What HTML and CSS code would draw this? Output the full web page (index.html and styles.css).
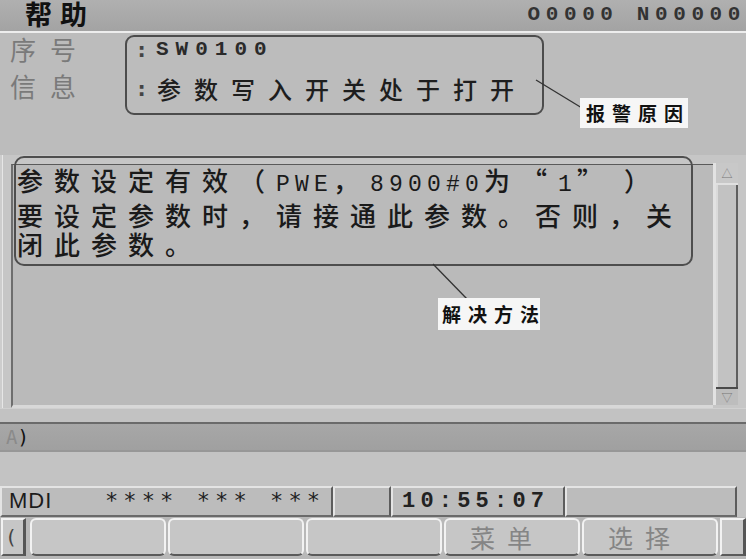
FILE: index.html
```html
<!DOCTYPE html>
<html lang="zh-CN">
<head>
    <meta charset="UTF-8">
    <meta name="viewport" content="width=device-width, initial-scale=1.0">
    <title>帮助</title>
    <link rel="stylesheet" href="styles.css">
</head>
<body>

<div class="screen">
    <div class="titlebar">
        <span class="title">帮助</span>
        <span class="prog">O0000 N00000</span>
    </div>

    <div class="info">
        <div class="labels">
            <div>序号</div>
            <div>信息</div>
        </div>
        <div class="alarm-box">
            <div class="row row-code"><span class="colon">:</span><span class="code">SW0100</span></div>
            <div class="row row-text"><span class="colon">:</span><span>参数写入开关处于打开</span></div>
        </div>
    </div>

    <div class="panel">
        <div class="text-area">
            <div class="msg">
                参数设定有效（<span class="half">PWE</span>，<span class="half">8900#0</span>为“<span class="half">1</span><span class="close-quote">”</span>）<br>
                要设定参数时，请接通此参数。否则，关<br>
                闭此参数。
            </div>
        </div>
        <div class="scrollbar">
            <div class="scroll-btn up">&#9651;</div>
            <div class="scroll-track"></div>
            <div class="scroll-btn down">&#9661;</div>
        </div>
    </div>

    <div class="spacer"></div>

    <div class="inputbar"><span class="dim">A</span>)</div>

    <div class="blank"></div>

    <div class="status">
        <div class="cell cell-mode"><span class="mode">MDI</span><span class="stars">****&nbsp;***&nbsp;***</span></div>
        <div class="cell cell-empty"></div>
        <div class="cell cell-time">10:55:07</div>
        <div class="cell cell-rest"></div>
    </div>

    <div class="softkeys">
        <div class="key key-small">(</div>
        <div class="key"></div>
        <div class="key"></div>
        <div class="key"></div>
        <div class="key">菜单</div>
        <div class="key">选择</div>
        <div class="key key-small right"></div>
    </div>

    <!-- notes drawn over the screen -->
    <svg class="leaders" width="746" height="559" viewBox="0 0 746 559">
        <line x1="536" y1="80" x2="582" y2="108" stroke="#333" stroke-width="1.3"/>
        <line x1="433" y1="264" x2="468" y2="300" stroke="#333" stroke-width="1.3"/>
    </svg>
    <div class="note note-alarm">报警原因</div>
    <div class="note note-fix">解决方法</div>
</div>

</body>
</html>
```

FILE: styles.css
```css
body {
    margin: 0;
    padding: 0;
    background-color: #bcbcbc;
    font-family: "Noto Sans CJK SC", sans-serif;
    color: #1e1e1e;
}
.screen {
    position: relative;
    width: 746px;
    height: 559px;
    overflow: hidden;
    background-color: #bcbcbc;
}
.titlebar {
    height: 31px;
    display: flex;
    justify-content: space-between;
    background: linear-gradient(#b0b0b0, #a3a3a3);
    border-bottom: 2px solid #ededed;
}
.title {
    padding-left: 25px;
    font-size: 27px;
    font-weight: bold;
    line-height: 28px;
    letter-spacing: 8px;
    color: #111;
}
.prog {
    padding-top: 4px;
    font-family: "Liberation Mono", monospace;
    font-variant-numeric: slashed-zero;
    font-size: 21px;
    font-weight: bold;
    line-height: 22px;
    letter-spacing: 5.6px;
    color: #333;
    white-space: nowrap;
}
.info {
    height: 122px;
    display: flex;
}
.labels {
    width: 115px;
    padding-left: 10px;
    margin-top: -3px;
    font-size: 26px;
    line-height: 37px;
    letter-spacing: 14px;
    color: #7a7a7a;
}
.alarm-box {
    margin-top: 2px;
    width: 407px;
    height: 76px;
    border: 2px solid #4c4c4c;
    border-radius: 9px;
    padding-left: 8px;
}
.row {
    display: flex;
    white-space: nowrap;
}
.row-code {
    line-height: 26px;
    font-family: "Liberation Mono", monospace;
    font-variant-numeric: slashed-zero;
    font-size: 21px;
    font-weight: bold;
    letter-spacing: 7px;
    color: #2a2a2a;
}
.row-text {
    margin-top: 8px;
    line-height: 36px;
    font-size: 24px;
    font-weight: 500;
    letter-spacing: 13px;
}
.colon {
    width: 22px;
    font-family: "DejaVu Sans Mono", monospace;
    font-size: 22px;
    font-weight: bold;
    color: #444;
}
.row-code .colon {
    width: 21px;
}
.panel {
    height: 253px;
    display: flex;
    padding-left: 11px;
    padding-right: 8px;
    box-sizing: border-box;
    background: linear-gradient(90deg, #cdcdcd 0, #cdcdcd 2px, #e6e6e6 2px, #e6e6e6 3px, #c6c6c6 3px);
}
.text-area {
    flex: 1;
    margin-top: 9px;
    border-top: 1px solid #5a5a5a;
    border-left: 2px solid #6e6e6e;
    border-bottom: 3px solid #d8d8d8;
    background-color: #bababa;
}
.msg {
    margin: -9px 0 0 1px;
    width: 674px;
    height: 99px;
    padding: 7px 0 0 1px;
    border: 2px solid #4e4e4e;
    border-radius: 10px;
    font-size: 26px;
    font-weight: 500;
    line-height: 29px;
    letter-spacing: 11px;
    white-space: nowrap;
    color: #1a1a1a;
}
.half {
    font-family: "Liberation Mono", monospace;
    font-variant-numeric: slashed-zero;
    font-size: 23px;
    font-weight: normal;
    letter-spacing: 5.2px;
}
.close-quote {
    letter-spacing: 34px;
}
.scrollbar {
    width: 25px;
    margin-top: 8px;
    margin-bottom: 3px;
    display: flex;
    flex-direction: column;
    border-left: 3px solid #e2e2e2;
    box-sizing: border-box;
    background-color: #c4c4c4;
}
.scroll-btn {
    height: 20px;
    font-size: 11px;
    line-height: 20px;
    text-align: center;
    color: #777;
    background-color: #c8c8c8;
}
.scroll-btn.up {
    border-bottom: 2px solid #e0e0e0;
}
.scroll-btn.down {
    height: 16px;
    line-height: 16px;
    border-top: 2px solid #4a4a4a;
    background-color: #bdbdbd;
}
.scroll-track {
    flex: 1;
    border-left: 2px solid #dadada;
    border-right: 2px solid #5e5e5e;
    background-color: #c2c2c2;
}
.spacer {
    height: 14px;
    background-color: #c2c2c2;
    border-top: 1px solid #d0d0d0;
    box-sizing: border-box;
}
.inputbar {
    height: 30px;
    box-sizing: border-box;
    padding-left: 6px;
    border-top: 2px solid #6a6a6a;
    border-bottom: 2px solid #979797;
    background: linear-gradient(#a7a7a7, #a0a0a0);
    font-family: "DejaVu Sans Mono", monospace;
    font-size: 19px;
    line-height: 26px;
    color: #111;
}
.dim {
    color: #8a8a8a;
}
.blank {
    height: 34px;
    background-color: #c3c3c3;
}
.status {
    height: 31px;
    display: flex;
    background-color: #c3c3c3;
}
.cell {
    box-sizing: border-box;
    height: 31px;
    border-top: 2px solid #e4e4e4;
    border-left: 2px solid #e4e4e4;
    border-right: 2px solid #5c5c5c;
    border-bottom: 2px solid #6a6a6a;
    background-color: #bcbcbc;
    white-space: nowrap;
}
.cell-mode {
    width: 333px;
    display: flex;
    padding-left: 7px;
    line-height: 26px;
}
.mode {
    width: 96px;
    font-family: "Liberation Sans", sans-serif;
    font-size: 22px;
    letter-spacing: 1px;
    color: #1c1c1c;
}
.stars {
    font-family: "DejaVu Sans Mono", monospace;
    font-size: 22px;
    letter-spacing: 5.1px;
    color: #222;
}
.cell-empty {
    width: 58px;
}
.cell-time {
    width: 174px;
    padding-left: 9px;
    font-family: "Liberation Mono", monospace;
    font-variant-numeric: slashed-zero;
    font-size: 22px;
    font-weight: bold;
    line-height: 27px;
    letter-spacing: 5.2px;
    color: #222;
}
.cell-rest {
    width: 172px;
}
.softkeys {
    height: 42px;
    display: flex;
    gap: 2px;
    padding: 1px 0 0 1px;
    box-sizing: border-box;
    background-color: #b8b8b8;
}
.key {
    flex: 0 0 136px;
    height: 38px;
    box-sizing: border-box;
    border: 2px solid #f2f2f2;
    border-bottom: 2px solid #5a5a5a;
    border-radius: 6px;
    background-color: #c6c6c6;
    padding-left: 24px;
    font-size: 25px;
    line-height: 34px;
    letter-spacing: 12px;
    color: #858585;
    white-space: nowrap;
}
.key-small {
    flex: 0 0 25px;
    border-radius: 0;
    border-right: 3px solid #555;
    padding-left: 2px;
    letter-spacing: 0;
    font-family: "DejaVu Sans Mono", monospace;
    font-size: 20px;
    color: #444;
    margin-right: 2px;
}
.key-small.right {
    flex: 0 0 26px;
    margin: 0;
}
.leaders {
    position: absolute;
    left: 0;
    top: 0;
    pointer-events: none;
}
.note {
    position: absolute;
    background-color: #f6f6f6;
    font-size: 19px;
    font-weight: bold;
    line-height: 30px;
    letter-spacing: 7px;
    color: #111;
    white-space: nowrap;
}
.note-alarm {
    left: 580px;
    top: 98px;
    width: 102px;
    padding-left: 6px;
}
.note-fix {
    left: 438px;
    top: 298px;
    width: 98px;
    padding-left: 4px;
    height: 32px;
    line-height: 32px;
}
```
